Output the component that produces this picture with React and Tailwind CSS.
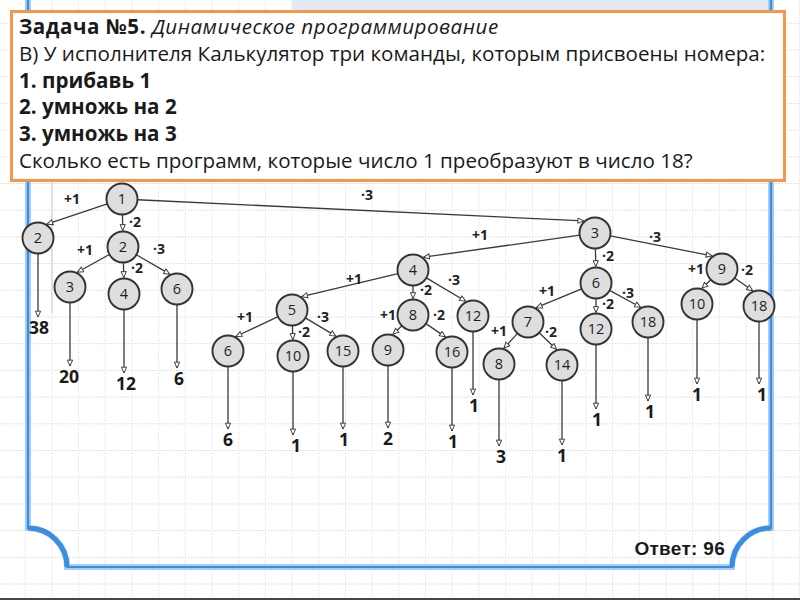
import React from 'react';

// tree of the calculator task: every node, its place and its label
const nodes = {
    n1: [122, 199, '1'],
    n2a: [38, 238, '2'],
    n2b: [123, 247, '2'],
    n3a: [70, 287, '3'],
    n4a: [124, 294, '4'],
    n6a: [177, 289, '6'],
    n3: [595, 233, '3'],
    n4: [413, 270, '4'],
    n5: [292, 310, '5'],
    n6b: [228, 351, '6'],
    n10a: [293, 356, '10'],
    n15: [343, 351, '15'],
    n8a: [413, 315, '8'],
    n9a: [388, 350, '9'],
    n16: [452, 352, '16'],
    n12a: [473, 316, '12'],
    n6c: [596, 283, '6'],
    n7: [528, 322, '7'],
    n8b: [499, 364, '8'],
    n14: [562, 365, '14'],
    n12b: [596, 329, '12'],
    n18a: [648, 322, '18'],
    n9b: [722, 269, '9'],
    n10b: [697, 304, '10'],
    n18b: [759, 306, '18'],
};

const edges = [
    ['n1', 'n2a'], ['n1', 'n2b'], ['n1', 'n3'],
    ['n2b', 'n3a'], ['n2b', 'n4a'], ['n2b', 'n6a'],
    ['n3', 'n4'], ['n3', 'n6c'], ['n3', 'n9b'],
    ['n4', 'n5'], ['n4', 'n8a'], ['n4', 'n12a'],
    ['n5', 'n6b'], ['n5', 'n10a'], ['n5', 'n15'],
    ['n8a', 'n9a'], ['n8a', 'n16'],
    ['n6c', 'n7'], ['n6c', 'n12b'], ['n6c', 'n18a'],
    ['n7', 'n8b'], ['n7', 'n14'],
    ['n9b', 'n10b'], ['n9b', 'n18b'],
];

// leaf node -> number of programs written under it
const leaves = [
    ['n2a', '38', 39, 328],
    ['n3a', '20', 69, 377],
    ['n4a', '12', 126, 384],
    ['n6a', '6', 179, 379],
    ['n6b', '6', 228, 440],
    ['n10a', '1', 296, 446],
    ['n15', '1', 344, 440],
    ['n9a', '2', 388, 439],
    ['n16', '1', 453, 442],
    ['n12a', '1', 474, 406],
    ['n8b', '3', 501, 457],
    ['n14', '1', 562, 456],
    ['n12b', '1', 597, 420],
    ['n18a', '1', 650, 412],
    ['n10b', '1', 697, 395],
    ['n18b', '1', 762, 395],
];

const opLabels = [
    ['+1', 72, 199], ['·2', 135, 222], ['+1', 85, 250], ['·3', 159, 249], ['·2', 137, 268],
    ['·3', 367, 195], ['+1', 480, 235], ['·3', 655, 237], ['·2', 608, 256],
    ['+1', 354, 279], ['·3', 454, 280], ['·2', 426, 290],
    ['+1', 245, 317], ['·2', 304, 332], ['·3', 323, 317],
    ['+1', 388, 315], ['·2', 439, 315],
    ['+1', 547, 291], ['·3', 628, 293], ['·2', 608, 304],
    ['+1', 499, 331], ['·2', 551, 332],
    ['+1', 696, 269], ['·2', 747, 270],
];

const R = 15.5;

function edgeLine(from, to) {
    const [px, py] = nodes[from];
    const [cx, cy] = nodes[to];
    // arrows come into the child from above, so bend the entry point upward
    let dx = px - cx;
    let dy = py - cy;
    let len = Math.hypot(dx, dy);
    let ux = dx / len;
    let uy = dy / len - 1;
    len = Math.hypot(ux, uy);
    const ex = cx + (ux / len) * (R + 1);
    const ey = cy + (uy / len) * (R + 1);
    const sx0 = ex - px;
    const sy0 = ey - py;
    const sl = Math.hypot(sx0, sy0);
    const sx = px + (sx0 / sl) * R;
    const sy = py + (sy0 / sl) * R;
    return { sx, sy, ex, ey };
}

const Tree = () => (
    <svg
        width="800"
        height="600"
        viewBox="0 0 800 600"
        className="absolute inset-0 font-['Open_Sans','Liberation_Sans',sans-serif]"
    >
        <defs>
            <pattern id="grid" width="26.7" height="26.7" x="24.6" y="22.8" patternUnits="userSpaceOnUse">
                <path d="M0 0.5 H26.7" stroke="#d6d6d6" strokeWidth="1" strokeDasharray="1.5 1.5" />
                <path d="M0.5 0 V26.7" stroke="#dedede" strokeWidth="1" strokeDasharray="1.5 1.5" />
            </pattern>
            <marker id="tip" viewBox="0 0 8 8" refX="7.5" refY="4" markerWidth="7" markerHeight="7" markerUnits="userSpaceOnUse" orient="auto">
                <path d="M0.8 1 L7.5 4 L0.8 7 Z" fill="#fff" stroke="#3a3a3a" strokeWidth="1.1" />
            </marker>
        </defs>

        <rect width="800" height="600" fill="#fff" />
        <rect width="800" height="600" fill="url(#grid)" />

        {/* notebook frame */}
        <rect x="292" y="0" width="479" height="10" fill="#e2eaf4" />
        <path d="M52 181 V313" stroke="#c9c9c9" strokeWidth="1" />
        <path
            d="M28 0 V528 A39 39 0 0 1 67 567 H732 A39 39 0 0 1 771 528 V0"
            fill="none"
            stroke="#a6cdf3"
            strokeWidth="6"
        />
        <path
            d="M28 0 V528 A39 39 0 0 1 67 567 H732 A39 39 0 0 1 771 528 V0"
            fill="none"
            stroke="#3a8de0"
            strokeWidth="2.2"
        />
        <path d="M28 528 A39 39 0 0 1 67 567" fill="none" stroke="#3a8de0" strokeWidth="5" />
        <path d="M732 567 A39 39 0 0 1 771 528" fill="none" stroke="#3a8de0" strokeWidth="5" />

        {edges.map(([a, b]) => {
            const { sx, sy, ex, ey } = edgeLine(a, b);
            return (
                <line key={a + b} x1={sx} y1={sy} x2={ex} y2={ey} stroke="#3a3a3a" strokeWidth="1.3" markerEnd="url(#tip)" />
            );
        })}

        {leaves.map(([id, , , ly]) => {
            const [x, y] = nodes[id];
            return (
                <line key={'l' + id} x1={x} y1={y + R} x2={x} y2={ly - 11} stroke="#3a3a3a" strokeWidth="1.3" markerEnd="url(#tip)" />
            );
        })}

        {Object.entries(nodes).map(([id, [x, y, label]]) => (
            <g key={id}>
                <circle cx={x} cy={y} r={R} fill="#dedede" stroke="#333" strokeWidth="1.9" />
                <text x={x} y={y + 5} textAnchor="middle" fontSize="14.5" fontWeight="500" fill="#1e1e1e">
                    {label}
                </text>
            </g>
        ))}

        {opLabels.map(([t, x, y], i) => (
            <text key={i} x={x} y={y + 5} textAnchor="middle" fontSize="14" fontWeight="bold" fill="#222">
                {t}
            </text>
        ))}

        {leaves.map(([id, n, x, y]) => (
            <text key={'n' + id} x={x} y={y + 6} textAnchor="middle" fontSize="17.5" fontWeight="bold" fill="#1a1a1a">
                {n}
            </text>
        ))}
    </svg>
);

export default function App() {
    return (
        <div className="relative w-[800px] h-[600px] overflow-hidden bg-white font-['Open_Sans','Liberation_Sans',sans-serif] text-[#1a1a1a]">
            <Tree />
            <div className="relative flex flex-col h-full">
                <div className="ml-[10px] mt-[10px] w-[776px] h-[172px] border-[3px] border-[#f79646] bg-white pl-[6px] text-[20.6px] leading-[26.8px]">
                    <p className="tracking-[0.5px]">
                        <b>Задача №5.</b> <i>Динамическое программирование</i>
                    </p>
                    <p>В) У исполнителя Калькулятор три команды, которым присвоены номера:</p>
                    <p className="font-bold">1. прибавь 1</p>
                    <p className="font-bold">2. умножь на 2</p>
                    <p className="font-bold">3. умножь на 3</p>
                    <p>Сколько есть программ, которые число 1 преобразуют в число 18?</p>
                </div>
                <div className="flex-1" />
                <div className="flex justify-end pr-[75px] pb-[39px]">
                    <span className="font-['Liberation_Sans',Arial,sans-serif] text-[19px] leading-[20px] font-bold tracking-[0.3px]">
                        Ответ: 96
                    </span>
                </div>
                <div className="h-[2px] bg-[#474747]" />
            </div>
        </div>
    );
}
